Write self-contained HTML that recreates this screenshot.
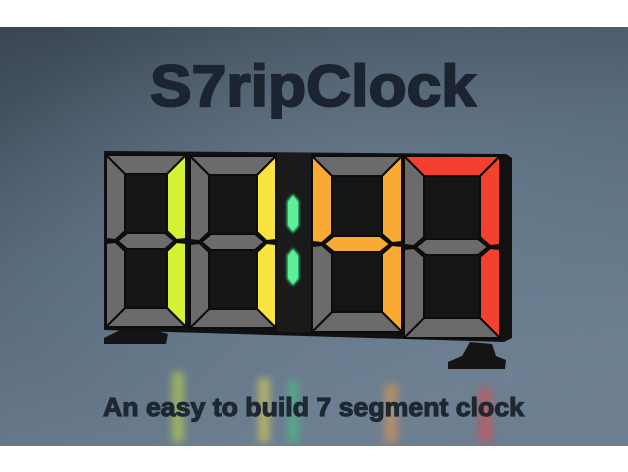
<!DOCTYPE html>
<html><head><meta charset="utf-8"><style>
html,body{margin:0;padding:0;background:#fff;width:628px;height:472px;overflow:hidden}
svg{display:block}
</style></head><body>
<svg id="s" width="628" height="472" viewBox="0 0 628 472" xmlns="http://www.w3.org/2000/svg">
<defs>
<linearGradient id="bg" x1="0" y1="0" x2="0.4" y2="1">
<stop offset="0" stop-color="#3a4652"/><stop offset="0.5" stop-color="#56687a"/><stop offset="1" stop-color="#6c7e90"/>
</linearGradient>
<radialGradient id="glow" cx="0.55" cy="0.45" r="0.6">
<stop offset="0" stop-color="#7a8da0" stop-opacity="0.5"/><stop offset="1" stop-color="#7a8da0" stop-opacity="0"/>
</radialGradient>
<filter id="bl" x="-1" y="-1" width="3" height="3"><feGaussianBlur stdDeviation="4"/></filter>
<filter id="gl" x="-0.5" y="-0.5" width="2" height="2"><feGaussianBlur stdDeviation="1.2"/></filter>
</defs>
<rect x="0" y="27" width="628" height="419" fill="url(#bg)"/>
<rect x="0" y="27" width="628" height="419" fill="url(#glow)"/>
<g filter="url(#bl)" opacity="0.55">
<rect x="172" y="372" width="12" height="70" fill="#c8e040"/>
<rect x="258" y="378" width="12" height="64" fill="#e8d850"/>
<rect x="288" y="380" width="10" height="62" fill="#40d080"/>
<rect x="384" y="384" width="14" height="58" fill="#e89850"/>
<rect x="478" y="388" width="14" height="54" fill="#e04848"/>
</g>
<text x="150" y="106" textLength="326" lengthAdjust="spacingAndGlyphs" font-family="Liberation Sans, sans-serif" font-weight="bold" font-size="58" fill="#1b2430" stroke="#1b2430" stroke-width="2">S7ripClock</text>
<polygon points="104,338 120,330 130,320 150,320 154,330 168,334 166,344 104,344" fill="#141414"/>
<polygon points="448,362 462,356 470,342 492,344 496,356 506,360 505,369 448,369" fill="#141414"/>
<polygon points="104,151 506,154 512,158 512,338 504,342 104,330" fill="#111"/>
<rect x="277" y="153" width="34" height="179" fill="#1a1a1a"/>
<g id="digits"></g>
<g filter="url(#gl)">
<polygon points="293,194 299,201 299,226 293,233 287,226 287,201" fill="#3ee686"/>
<polygon points="293,248 299,255 299,279 293,286 287,279 287,255" fill="#3ee686"/>
</g>
<polygon points="293,196 298,202 298,225 293,231 288,225 288,202" fill="#5cf09a"/>
<polygon points="293,250 298,256 298,278 293,284 288,278 288,256" fill="#5cf09a"/>
<text x="103" y="416" textLength="421" lengthAdjust="spacingAndGlyphs" font-family="Liberation Sans, sans-serif" font-weight="bold" font-size="26" fill="#1e2832" stroke="#1e2832" stroke-width="1.2">An easy to build 7 segment clock</text>
</svg>
<script>
var G='#6b6b6b';
function digit(x0,y0,x1,y1,t,c){
 var m=(y0+y1)/2,h=t/2,k=8,o='';
 function P(p,col){o+='<polygon points="'+p.map(function(a){return a.join(',')}).join(' ')+'" fill="'+col+'" stroke="#0c0c0c" stroke-width="2" stroke-linejoin="round"/>';}
 o+='<rect x="'+(x0+t)+'" y="'+(y0+t)+'" width="'+(x1-x0-2*t)+'" height="'+(y1-y0-2*t)+'" fill="#151515"/>';
 P([[x0,y0],[x1,y0],[x1-t,y0+t],[x0+t,y0+t]],c[0]);
 P([[x1,y0],[x1,m-2],[x1-h,m-1],[x1-t,m-k-2],[x1-t,y0+t]],c[1]);
 P([[x1,m+2],[x1,y1],[x1-t,y1-t],[x1-t,m+k+2],[x1-h,m+1]],c[2]);
 P([[x0,y1],[x1,y1],[x1-t,y1-t],[x0+t,y1-t]],c[3]);
 P([[x0,m+2],[x0,y1],[x0+t,y1-t],[x0+t,m+k+2],[x0+h,m+1]],c[4]);
 P([[x0,y0],[x0,m-2],[x0+h,m-1],[x0+t,m-k-2],[x0+t,y0+t]],c[5]);
 P([[x0+h+2,m],[x0+t+2,m-k],[x1-t-2,m-k],[x1-h-2,m],[x1-t-2,m+k],[x0+t+2,m+k]],c[6]);
 return o;
}
var Y1='#d6f034',Y2='#f8e43c',O='#f8aa34',R='#f4402e';
var s=digit(106,155,186,327,19,[G,Y1,Y1,G,G,G,G])
+digit(190,156,276,328,19,[G,Y2,Y2,G,G,G,G])
+digit(312,156,402,332,20,[G,O,O,G,G,O,O])
+digit(404,156,500,338,20,[R,R,R,G,G,G,G]);
document.getElementById('digits').innerHTML=s;
</script>
</body></html>
